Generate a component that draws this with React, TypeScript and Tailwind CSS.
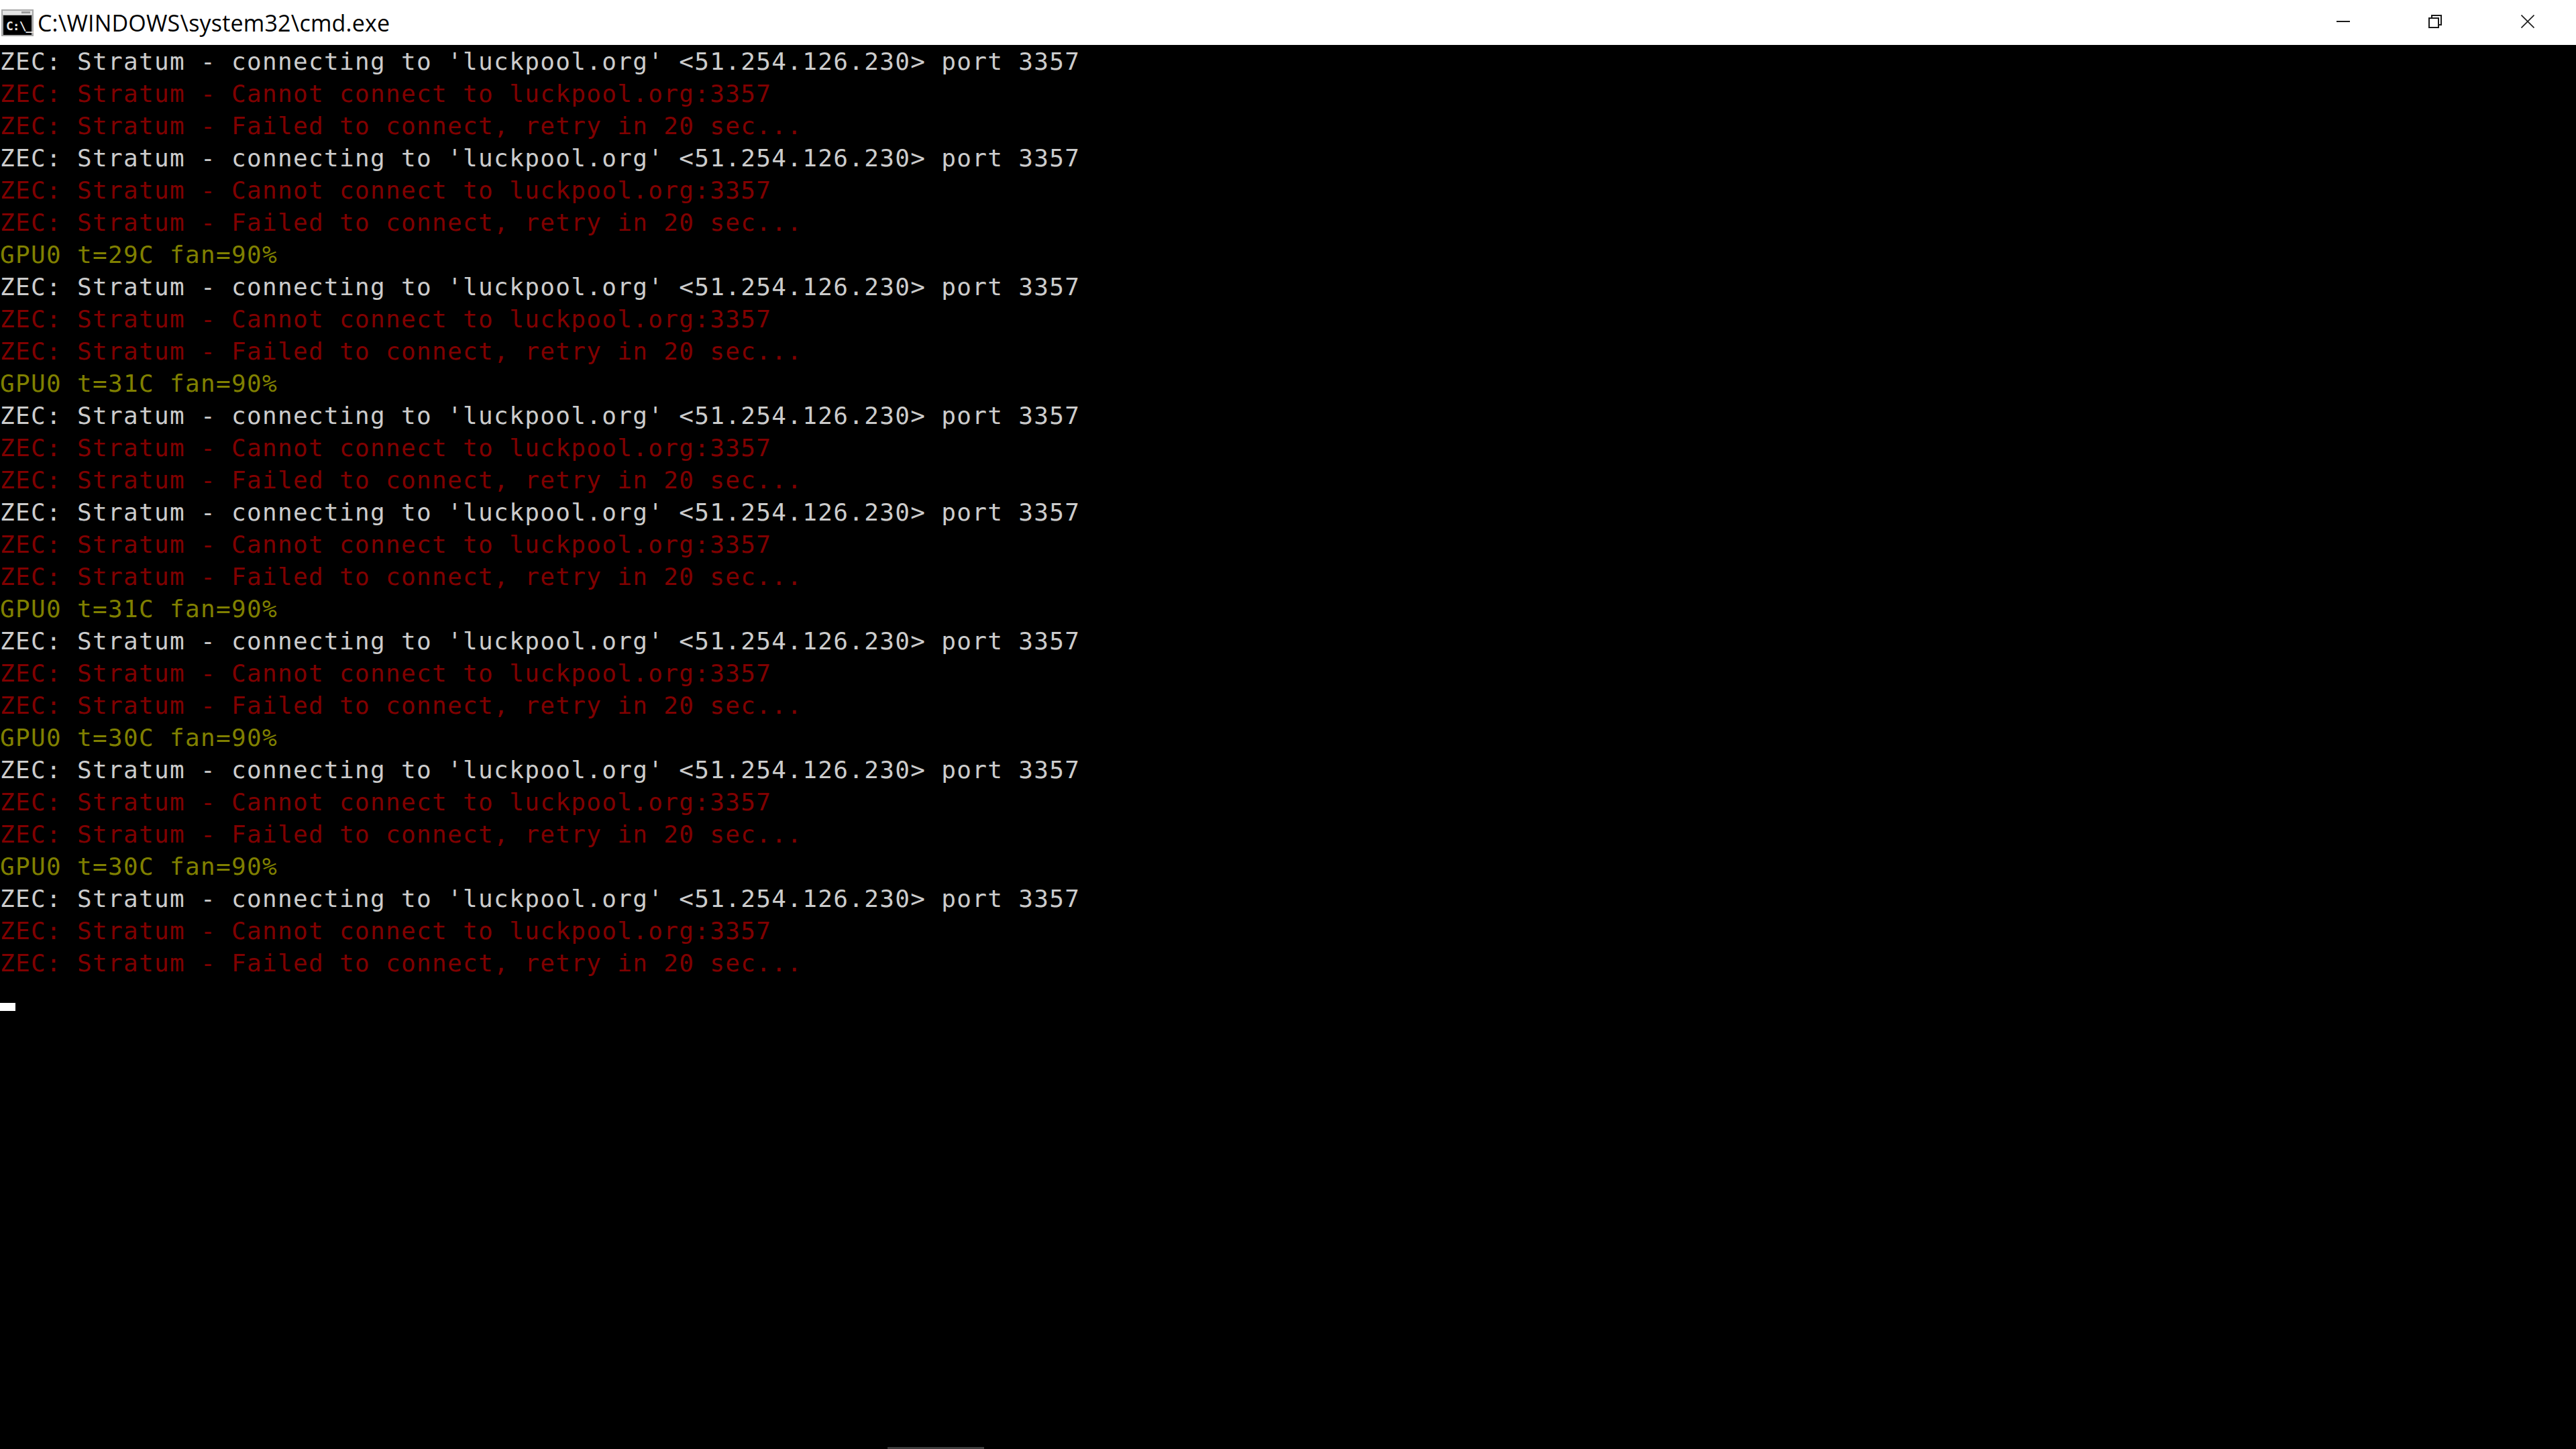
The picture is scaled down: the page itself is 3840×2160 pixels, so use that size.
const connecting = "ZEC: Stratum - connecting to 'luckpool.org' <51.254.126.230> port 3357";
const cannot = "ZEC: Stratum - Cannot connect to luckpool.org:3357";
const failed = "ZEC: Stratum - Failed to connect, retry in 20 sec...";

const lines = [
  connecting, cannot, failed,
  connecting, cannot, failed,
  "GPU0 t=29C fan=90%",
  connecting, cannot, failed,
  "GPU0 t=31C fan=90%",
  connecting, cannot, failed,
  connecting, cannot, failed,
  "GPU0 t=31C fan=90%",
  connecting, cannot, failed,
  "GPU0 t=30C fan=90%",
  connecting, cannot, failed,
  "GPU0 t=30C fan=90%",
  connecting, cannot, failed,
];

const lineColor = (line: string) => {
  if (line.startsWith("GPU0")) return "text-[#808000]";
  if (line === connecting) return "text-[#cccccc]";
  return "text-[#800000]";
};

const CmdIcon = () => (
  <svg width="48" height="40" viewBox="0 0 48 40" className="shrink-0">
    <rect x="0" y="0" width="48" height="40" fill="#a8a8a8" />
    <rect x="2" y="2" width="44" height="6" fill="#e4e4e4" />
    <rect x="30" y="3" width="13" height="3" fill="#9a9a9a" />
    <rect x="3" y="9" width="42" height="29" fill="#000000" />
    <text x="7" y="31" fontFamily="'DejaVu Sans Mono', monospace" fontWeight="700" fontSize="18" fill="#e8e8e8" letterSpacing="-1">C:\_</text>
  </svg>
);

const App = () => {
  return (
    <div className="w-[3840px] h-[2160px] flex flex-col bg-black overflow-hidden">
      {/* title bar */}
      <div className="h-[67px] shrink-0 bg-white flex items-center">
        <div className="ml-[2px] mr-[6px] mt-[1px]">
          <CmdIcon />
        </div>
        <div className="mt-[1px] font-['Open_Sans',sans-serif] text-[34px] tracking-[0.2px] text-black whitespace-pre">C:\WINDOWS\system32\cmd.exe</div>
        <div className="ml-auto flex items-center mr-[62px] -mt-[3px]">
          <svg width="20" height="20" viewBox="0 0 20 20">
            <rect x="0" y="9" width="20" height="2" fill="#1a1a1a" />
          </svg>
          <svg width="20" height="20" viewBox="0 0 20 20" fill="none" stroke="#1a1a1a" strokeWidth="2" className="ml-[117px]">
            <rect x="1" y="5" width="14" height="14" />
            <path d="M5 5V1H19V15H15" />
          </svg>
          <svg width="20" height="20" viewBox="0 0 20 20" fill="none" stroke="#1a1a1a" strokeWidth="1.6" className="ml-[118px]">
            <path d="M0.5 0.5L19.5 19.5M19.5 0.5L0.5 19.5" />
          </svg>
        </div>
      </div>

      {/* console output */}
      <div className="flex-1 flex flex-col font-['DejaVu_Sans_Mono',monospace] text-[36px] tracking-[1.33px]">
        {lines.map((line, i) => (
          <div key={i} className={`h-[48px] leading-[50px] whitespace-pre ${lineColor(line)}`}>
            {line}
          </div>
        ))}
        {/* cursor row */}
        <div className="h-[48px] flex items-end">
          <div className="w-[23px] h-[12px] bg-white" />
        </div>
        <div className="mt-auto ml-[1323px] w-[144px] h-[3px] bg-[#3c3c3c]" />
      </div>
    </div>
  );
};

export default App;
